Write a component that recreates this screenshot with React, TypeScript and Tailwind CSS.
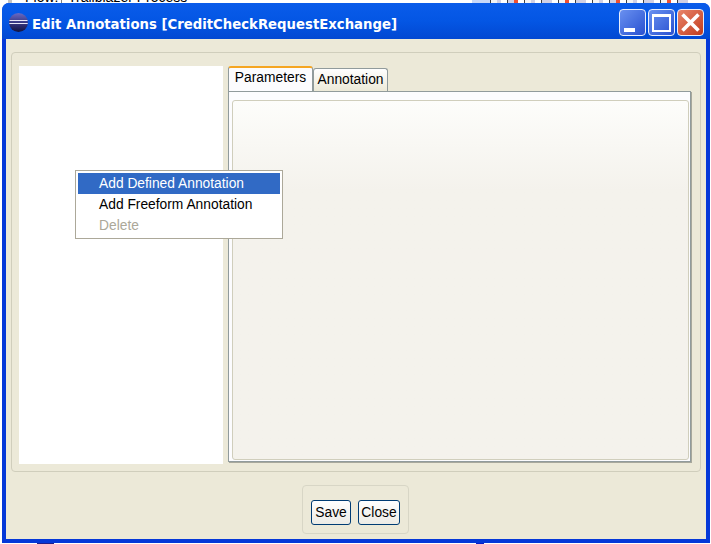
import type { ReactNode } from "react";

const sans = "font-['Liberation_Sans',Arial,sans-serif]";

const MenuItem = ({ label, className }: { label: string; className: string }) => (
  <div className={`h-[21px] pl-[21px] text-[13.8px] leading-[21px] ${className}`}>{label}</div>
);

const CaptionButton = ({ className, children }: { className: string; children: ReactNode }) => (
  <div className={`flex h-[27px] w-[27px] rounded-[4px] border border-[#e8eefc] ${className}`}>
    {children}
  </div>
);

const Button = ({ label, width }: { label: string; width: string }) => (
  <div className={`flex h-[25px] ${width} items-center justify-center rounded-[3px] border border-[#003c74] bg-gradient-to-b from-white to-[#ecebe5] pt-[2px] text-[13.8px] text-black`}>
    {label}
  </div>
);

// window behind the dialog, only its edge shows above the title bar
const cells = [0, 1, 2, 3, 4, 5, 6, 7, 8, 9, 10, 11];

const BehindStrip = () => (
  <div className="flex h-[3px] overflow-hidden bg-white text-[14px] text-black">
    <div className="ml-[8px] w-[4px] bg-[#c4c4c4]" />
    <div className="flex w-[49px] items-end pl-[13px]">
      <span className="mb-[-2px] leading-[16px]">Flow:</span>
    </div>
    <div className="w-[1px] bg-[#808080]" />
    <div className="flex w-[410px] items-end pl-[6px]">
      <span className="mb-[-2px] whitespace-nowrap leading-[16px]">Trailblazer Process</span>
    </div>
    <div className="w-[18px] bg-[#c8d8f8]" />
    {cells.map((i) => (
      <div key={i} className="flex w-[17px] border-l border-[#404040]">
        <div className={i % 2 === 0 ? "w-[6px] bg-[#f4f4f4]" : "w-[6px] bg-[#d0d0e4]"} />
        <div className={i % 3 === 1 ? "w-[4px] bg-[#f05030]" : "w-[4px] bg-[#d0d0e4]"} />
      </div>
    ))}
  </div>
);

export default function App() {
  return (
    <div className={`relative h-[544px] w-[711px] overflow-hidden bg-white text-black ${sans}`}>
      <BehindStrip />
      <div className="ml-[2px] flex h-[540px] w-[708px] flex-col rounded-t-[7px] bg-[#0538d8]">
        <div className="flex h-[36px] items-center rounded-t-[7px] bg-gradient-to-b from-[#0a5cea] via-[#0456e4] to-[#0248d2] pb-[3px] pl-[7px] pr-[6px] pt-[6px]">
          <svg width="19" height="19" viewBox="0 0 19 19">
            <defs>
              <linearGradient id="globe" x1="0" y1="0" x2="0" y2="1">
                <stop offset="0" stopColor="#6a6ac4" />
                <stop offset="0.55" stopColor="#34347e" />
                <stop offset="1" stopColor="#12123e" />
              </linearGradient>
            </defs>
            <circle cx="9.5" cy="9.5" r="9.5" fill="url(#globe)" />
            <path d="M0.5 7.5h18M0.3 10.5h18.4" stroke="#e8e8f8" strokeWidth="1" />
          </svg>
          <span className="ml-[4px] mt-[5px] font-['DejaVu_Sans',sans-serif] text-[13.25px] font-bold text-white">
            Edit Annotations [CreditCheckRequestExchange]
          </span>
          <div className="ml-auto flex gap-[2px]">
            <CaptionButton className="items-end bg-gradient-to-br from-[#6a90f0] to-[#2a50d0] pb-[3px] pl-[4px]">
              <div className="h-[4px] w-[11px] bg-white" />
            </CaptionButton>
            <CaptionButton className="items-center justify-center bg-gradient-to-br from-[#6a90f0] to-[#2a50d0]">
              <div className="h-[18px] w-[19px] border-2 border-t-[3px] border-white" />
            </CaptionButton>
            <CaptionButton className="items-center justify-center bg-gradient-to-br from-[#e8846a] to-[#c23a18]">
              <svg width="19" height="19" viewBox="0 0 19 19">
                <path d="M1.5 1.5l16 16M17.5 1.5l-16 16" stroke="white" strokeWidth="3.6" />
              </svg>
            </CaptionButton>
          </div>
        </div>
        <div className="mx-[4px] flex h-[500px] flex-col bg-[#ece9d8] px-[5px] pt-[13px]">
          <div className="flex h-[420px] rounded-[4px] border border-[#d0cebc] pb-[7px] pl-[7px] pr-[9px] pt-[13px]">
            <div className="w-[204px] bg-white" />
            <div className="ml-[5px] flex flex-1 flex-col pb-[2px]">
              <div className="flex h-[25px] items-end">
                <div className="h-[25px] w-[85px] rounded-t-[3px] border-x border-t-2 border-[#919b9c] border-t-[#f5a623] bg-[#fcfcfe] text-center text-[13.8px] leading-[20px]">
                  Parameters
                </div>
                <div className="h-[23px] w-[75px] rounded-t-[3px] border border-b-0 border-[#919b9c] bg-gradient-to-b from-white to-[#ece9d8] text-center text-[13.8px] leading-[22px]">
                  Annotation
                </div>
              </div>
              <div className="flex-1 border border-[#919b9c] bg-[#fcfcfe] pb-[1px] pl-[3px] pr-[1px] pt-[8px] shadow-[1px_1px_0_#a8a89c]">
                <div className="h-full rounded-[3px] border border-[#d0cebc] bg-gradient-to-b from-[#fdfdfb] to-[#f4f2ec] to-[25%]" />
              </div>
            </div>
          </div>
          <div className="flex flex-1 justify-center pr-[1px] pt-[13px]">
            <div className="flex h-[49px] w-[107px] items-start justify-center gap-[7px] rounded-[4px] border border-[#d8d6c6] pt-[14px]">
              <Button label="Save" width="w-[40px]" />
              <Button label="Close" width="w-[42px]" />
            </div>
          </div>
        </div>
      </div>
      <div className="flex h-[1px]">
        <div className="w-[37px]" />
        <div className="w-[17px] bg-[#20208c]" />
        <div className="w-[422px]" />
        <div className="w-[8px] bg-[#0a1ec8]" />
      </div>
      <div className="absolute left-[75px] top-[170px] w-[208px] border border-[#aca899] bg-white p-[2px]">
        <MenuItem label="Add Defined Annotation" className="bg-[#316ac5] text-white" />
        <MenuItem label="Add Freeform Annotation" className="text-black" />
        <MenuItem label="Delete" className="text-[#aca899]" />
      </div>
    </div>
  );
}
